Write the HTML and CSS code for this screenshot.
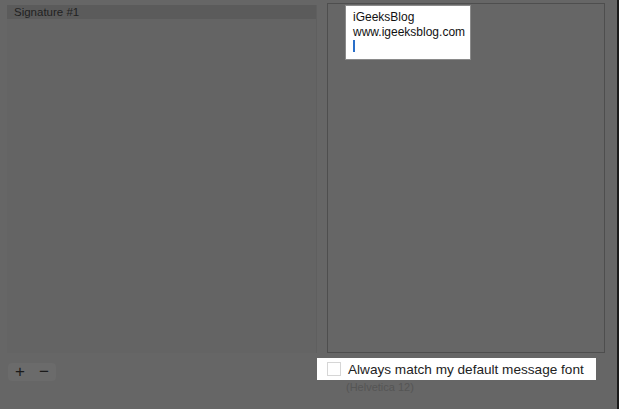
FILE: index.html
```html
<!DOCTYPE html>
<html>
<head>
<meta charset="utf-8">
<link rel="stylesheet" href="styles.css">
</head>
<body>
<div class="window">
  <div class="main">
    <div class="left">
      <div class="list">
        <div class="row">Signature #1</div>
      </div>
      <div class="buttons">
        <span class="btn">+</span><span class="btn minus">−</span>
      </div>
    </div>
    <div class="right">
      <div class="editor">
        <div class="sig">
          <div>iGeeksBlog</div>
          <div>www.igeeksblog.com</div>
          <div class="cursor"></div>
        </div>
      </div>
      <div class="option">
        <span class="check"></span>
        <span class="label">Always match my default message font</span>
      </div>
      <div class="font-note">(Helvetica 12)</div>
    </div>
  </div>
  <div class="edge"></div>
</div>
</body>
</html>
```
FILE: styles.css
```css
html, body {
  margin: 0;
  padding: 0;
  background: #666666;
  font-family: "Liberation Sans", Arial, sans-serif;
  width: 619px;
  height: 409px;
  overflow: hidden;
}
.window {
  display: flex;
  height: 409px;
}
.main {
  flex: 1;
  display: flex;
}
.left {
  width: 310px;
  padding: 5px 0 0 7px;
  display: flex;
  flex-direction: column;
}
.list {
  height: 348px;
  background: #646464;
  border-right: 1px solid #5f5f5f;
}
.row {
  height: 14px;
  background: #5b5b5b;
  color: #222;
  font-size: 11.5px;
  line-height: 14px;
  padding-left: 7px;
}
.buttons {
  margin-top: 10px;
  display: flex;
  width: 48px;
  height: 18px;
  background: #6b6b6b;
  border-radius: 4px;
  margin-left: 1px;
}
.btn {
  flex: 1;
  text-align: center;
  color: #1a1a1a;
  font-size: 17px;
  line-height: 18px;
}
.right {
  width: 290px;
  padding: 3px 0 0 10px;
  display: flex;
  flex-direction: column;
}
.editor {
  width: 278px;
  border: 1px solid #4e4e4e;
  background: #666666;
  padding: 1px 0 0 17px;
  box-sizing: border-box;
  height: 350px;
}
.sig {
  width: 126px;
  height: 55px;
  background: #ffffff;
  border: 1px solid #8a8a8a;
  box-sizing: border-box;
  padding: 4px 0 0 7px;
  font-size: 12px;
  line-height: 15px;
  color: #111;
}
.cursor {
  width: 2px;
  height: 12px;
  background: #2a6fc9;
  margin-top: 0;
}
.option {
  margin-top: 5px;
  margin-left: -10px;
  width: 279px;
  height: 22px;
  background: #ffffff;
  display: flex;
  align-items: center;
}
.check {
  width: 12px;
  height: 12px;
  border: 1px solid #d6d6d6;
  background: #fff;
  margin-left: 10px;
  margin-right: 7px;
}
.label {
  font-size: 13.6px;
  color: #222;
}
.font-note {
  margin-top: 1px;
  margin-left: 19px;
  font-size: 11px;
  color: #555555;
}
.edge {
  width: 6px;
  background: #1a1a1a;
}
```
